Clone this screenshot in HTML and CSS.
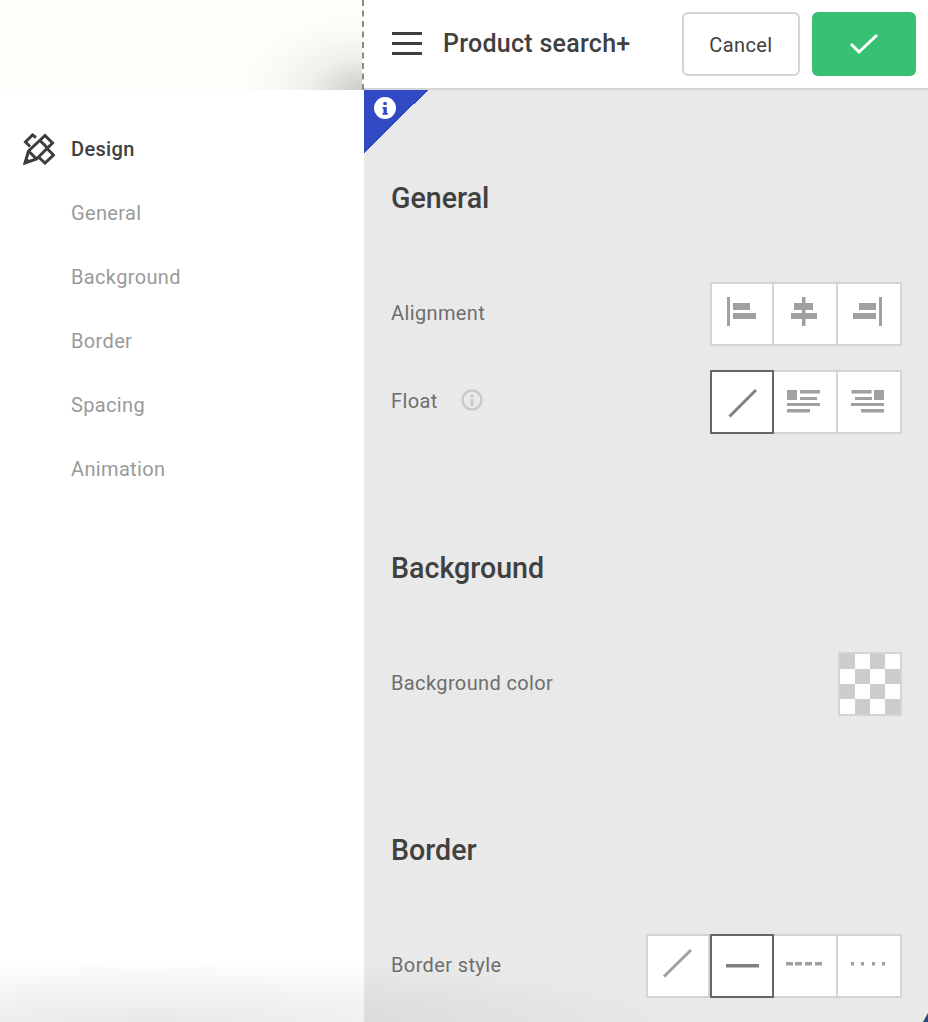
FILE: index.html
```html
<!DOCTYPE html>
<html lang="en">
<head>
  <meta charset="UTF-8" />
  <meta name="viewport" content="width=device-width, initial-scale=1" />
  <title>Product search+</title>
  <link rel="stylesheet" href="styles.css">
</head>
<body>

<div class="app">
  <aside class="side">
    <div class="side-top"></div>
    <nav class="side-nav">
      <div class="nav-head">
        <svg class="nav-icon" width="32" height="32" viewBox="0 0 32 32" fill="none" stroke="#3d3d3d" stroke-width="3">
          <path d="M2 30L5.500 18 22 2.500l7.500 7.500L13.500 26z" />
          <path d="M5.500 18l8 8" />
          <path d="M17 7.500l7.500 7.500" />
          <path d="M13 4.500L9.500 2 2.500 9l4.500 4.500" />
          <path d="M24.500 16L30.500 22l-8.500 8-6-5.500" />
          <path d="M1 31l2-7 5 5z" fill="#3d3d3d" stroke="none" />
        </svg>
        <span>Design</span>
      </div>
      <a class="nav-link">General</a>
      <a class="nav-link">Background</a>
      <a class="nav-link">Border</a>
      <a class="nav-link">Spacing</a>
      <a class="nav-link">Animation</a>
    </nav>
  </aside>

  <main class="main">
    <header class="topbar">
      <svg class="menu-icon" width="30" height="24" viewBox="0 0 30 24" fill="#3d3d3d">
        <rect y="0" width="30" height="3" />
        <rect y="10" width="30" height="3" />
        <rect y="20" width="30" height="3" />
      </svg>
      <h1 class="title">Product search+</h1>
      <button class="btn-cancel">Cancel</button>
      <button class="btn-ok">
        <svg width="30" height="22" viewBox="0 0 30 22" fill="none" stroke="#fff" stroke-width="3">
          <path d="M2 11l8 8L28 2" />
        </svg>
      </button>
    </header>

    <div class="panel">
      <div class="corner">
        <svg class="corner-info" width="22" height="22" viewBox="0 0 22 22">
          <circle cx="11" cy="11" r="11" fill="#fff" />
          <rect x="9.300" y="5" width="3.500" height="3" rx="1" fill="#3249c4" />
          <path d="M8.500 10h4.300v6h1v1.800H8.500V16h1v-4.200h-1z" fill="#3249c4" />
        </svg>
      </div>

      <section class="group group-general">
        <h2>General</h2>
        <div class="row row-first">
          <label>Alignment</label>
          <div class="opts">
            <div class="opt">
              <svg class="up" width="32" height="32" viewBox="0 0 32 32" fill="#a0a0a0">
                <rect x="1" y="1" width="3" height="29" />
                <rect x="7" y="7" width="17" height="7" />
                <rect x="7" y="17" width="23" height="6" />
              </svg>
            </div>
            <div class="opt">
              <svg class="up" width="32" height="32" viewBox="0 0 32 32" fill="#a0a0a0">
                <rect x="13" y="1" width="3.500" height="29" />
                <rect x="5" y="7" width="19" height="7" />
                <rect x="2" y="17" width="26" height="6" />
              </svg>
            </div>
            <div class="opt">
              <svg class="up" width="32" height="32" viewBox="0 0 32 32" fill="#a0a0a0">
                <rect x="26" y="1" width="3" height="29" />
                <rect x="6" y="7" width="17" height="7" />
                <rect x="0" y="17" width="23" height="6" />
              </svg>
            </div>
          </div>
        </div>
        <div class="row">
          <label>Float <svg class="hint" width="22" height="22" viewBox="0 0 22 22"><circle cx="11" cy="11" r="9.500" fill="none" stroke="#c9c9c9" stroke-width="2.500" /><rect x="9.500" y="5.500" width="3" height="3" fill="#c9c9c9" /><rect x="9.500" y="10" width="3" height="6.500" fill="#c9c9c9" /></svg></label>
          <div class="opts">
            <div class="opt opt-on">
              <svg width="32" height="32" viewBox="0 0 32 32"><path d="M3.500 30.500L30 4" stroke="#808080" stroke-width="3" /></svg>
            </div>
            <div class="opt">
              <svg width="36" height="24" viewBox="0 0 36 24" fill="#a0a0a0">
                <rect x="0" y="0" width="10" height="10" />
                <rect x="13" y="0" width="20" height="3.500" />
                <rect x="13" y="7" width="17" height="3" />
                <rect x="0" y="13" width="33" height="3" />
                <rect x="0" y="19" width="23" height="3.500" />
              </svg>
            </div>
            <div class="opt">
              <svg width="36" height="24" viewBox="0 0 36 24" fill="#a0a0a0">
                <rect x="23" y="0" width="10" height="10" />
                <rect x="0.500" y="0" width="20" height="3.500" />
                <rect x="4" y="7" width="17" height="3" />
                <rect x="0" y="13" width="33" height="3" />
                <rect x="10" y="19" width="23" height="3.500" />
              </svg>
            </div>
          </div>
        </div>
      </section>

      <section class="group group-background">
        <h2>Background</h2>
        <div class="row row-first">
          <label>Background color</label>
          <div class="swatch"></div>
        </div>
      </section>

      <section class="group group-border">
        <h2>Border</h2>
        <div class="row row-first">
          <label>Border style</label>
          <div class="opts">
            <div class="opt">
              <svg class="up" width="32" height="32" viewBox="0 0 32 32"><path d="M2 28.500L29 2" stroke="#a0a0a0" stroke-width="3" /></svg>
            </div>
            <div class="opt opt-on">
              <svg width="34" height="4" viewBox="0 0 34 4"><rect x="1" width="33" height="3.500" fill="#808080" /></svg>
            </div>
            <div class="opt">
              <svg class="up-line" width="38" height="4" viewBox="0 0 38 4" fill="#a0a0a0">
                <rect width="7" height="3.500" /><rect x="9" width="7" height="3.500" /><rect x="19" width="7" height="3.500" /><rect x="29" width="7" height="3.500" />
              </svg>
            </div>
            <div class="opt">
              <svg class="up-line" width="36" height="4" viewBox="0 0 36 4" fill="#a0a0a0">
                <rect width="3" height="3.500" /><rect x="10" width="3" height="3.500" /><rect x="21" width="3" height="3.500" /><rect x="31" width="3" height="3.500" />
              </svg>
            </div>
          </div>
        </div>
      </section>
    </div>
  </main>
  <div class="bottom-shade"></div>
  <div class="corner-peek"></div>
</div>

</body>
</html>
```

FILE: styles.css
```css
html, body {
  margin: 0;
  height: 100%;
  overflow: hidden;
}
body {
  font-family: Roboto, "Liberation Sans", sans-serif;
  color: #404040;
  background: #fff;
}
.app {
  display: flex;
  height: 1022px;
  position: relative;
  overflow: hidden;
}
.side {
  width: 364px;
  flex: none;
}
.side-top {
  height: 90px;
  box-sizing: border-box;
  border-right: 2px dashed #8a8a8a;
  background:
    radial-gradient(ellipse 130px 80px at 100% 100%, rgba(0,0,0,.2), rgba(0,0,0,.06) 40%, rgba(0,0,0,.02) 70%, rgba(0,0,0,0) 100%),
    #fffefa;
}
.side-nav {
  padding: 38px 0 0 23px;
}
.nav-head {
  display: flex;
  align-items: center;
  height: 42px;
  margin-bottom: 22px;
  font-size: 20px;
  font-weight: 500;
  letter-spacing: .35px;
  gap: 16px;
}
.nav-icon {
  flex: none;
}
.nav-link {
  display: block;
  margin-left: 48px;
  height: 64px;
  line-height: 42px;
  font-size: 20px;
  letter-spacing: .35px;
  color: #9a9a9a;
}
.main {
  flex: 1;
  min-width: 0;
}
.topbar {
  height: 90px;
  box-sizing: border-box;
  border-bottom: 2px solid #d4d4d4;
  display: flex;
  align-items: center;
  padding: 0 12px 0 28px;
  background: #fff;
}
.menu-icon {
  flex: none;
}
.title {
  flex: 1;
  margin: 0 0 2px 21px;
  font-size: 25px;
  font-weight: 500;
  letter-spacing: .27px;
}
.btn-cancel {
  width: 118px;
  height: 64px;
  box-sizing: border-box;
  border: 2px solid #d4d4d4;
  border-radius: 6px;
  padding-top: 2px;
  background: #fff;
  font-family: inherit;
  font-size: 20px;
  letter-spacing: .4px;
  color: #404040;
}
.btn-ok {
  width: 104px;
  height: 64px;
  margin-left: 12px;
  border: none;
  border-radius: 6px;
  background: #38c172;
  display: flex;
  align-items: center;
  justify-content: center;
}
.panel {
  height: 932px;
  position: relative;
  background: #e9e9e9;
  padding: 0 26px 0 27px;
}
.corner {
  position: absolute;
  left: 0;
  top: 0;
  width: 64px;
  height: 64px;
  background: linear-gradient(135deg, #3249c4 50%, transparent 50%);
}
.corner-info {
  position: absolute;
  left: 10px;
  top: 7px;
}
.group h2 {
  margin: 0;
  font-size: 28.600px;
  line-height: 36px;
  font-weight: 500;
}
.group-general {
  padding-top: 90px;
}
.group-background,
.group-border {
  padding-top: 116px;
}
.row {
  display: flex;
  justify-content: space-between;
  align-items: center;
  margin-top: 24px;
}
.row-first {
  margin-top: 66px;
}
.row label {
  font-size: 20px;
  letter-spacing: .38px;
  color: #6e6e6e;
  display: flex;
  align-items: center;
  gap: 23px;
  padding-bottom: 2px;
}
.hint {
  flex: none;
  margin-bottom: 2px;
}
.opts {
  display: flex;
}
.opt {
  width: 64px;
  height: 64px;
  box-sizing: border-box;
  border: 2px solid #d4d4d4;
  border-left: 0;
  background: #fff;
  display: flex;
  align-items: center;
  justify-content: center;
}
.opt:first-child {
  border-left: 2px solid #d4d4d4;
}
.opt.opt-on {
  border: 2px solid #666;
}
.up {
  margin-top: -4px;
}
.up-line {
  margin-top: -4px;
}
.swatch {
  width: 64px;
  height: 64px;
  box-sizing: border-box;
  border: 2px solid #d4d4d4;
  background-color: #fff;
  background-image: conic-gradient(#fff 25%, #ccc 0 50%, #fff 0 75%, #ccc 0);
  background-size: 30px 30px;
  background-origin: padding-box;
}
.bottom-shade {
  position: absolute;
  left: 0;
  right: 0;
  bottom: 0;
  height: 65px;
  pointer-events: none;
  background: radial-gradient(ellipse 550px 65px at 150px 100%, rgba(0,0,0,.09), rgba(0,0,0,0) 100%);
}
.corner-peek {
  position: absolute;
  right: 0;
  bottom: 0;
  width: 5px;
  height: 9px;
  background: #1f4a78;
  clip-path: polygon(100% 0, 100% 100%, 0 100%);
}
```
